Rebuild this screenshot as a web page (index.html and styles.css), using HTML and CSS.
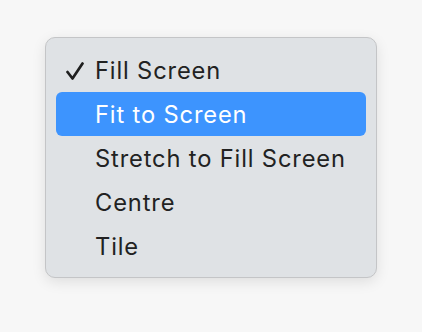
FILE: index.html
```html
<!DOCTYPE html>
<html>
<head>
<meta charset="utf-8">
<link rel="stylesheet" href="styles.css">
</head>
<body>
<div class="menu">
  <div class="item"><svg class="check" width="18" height="20" viewBox="0 0 18 20"><path d="M1.5 11 L6.5 17.5 L16.5 2.5" fill="none" stroke="#1f1f1f" stroke-width="2.7" stroke-linecap="round" stroke-linejoin="round"/></svg>Fill Screen</div>
  <div class="item active">Fit to Screen</div>
  <div class="item">Stretch to Fill Screen</div>
  <div class="item">Centre</div>
  <div class="item">Tile</div>
</div>
</body>
</html>
```
FILE: styles.css
```css
html, body {
  margin: 0;
  padding: 0;
  background: #f7f7f7;
}
body {
  width: 422px;
  height: 332px;
  padding: 37px 0 0 45px;
  box-sizing: border-box;
  font-family: Inter, "Liberation Sans", sans-serif;
}
.menu {
  width: 332px;
  height: 241px;
  box-sizing: border-box;
  background: #dfe2e5;
  border: 1px solid #c4c5c7;
  border-radius: 10px;
  padding: 10px 10px;
  box-shadow: 0 4px 14px rgba(0, 0, 0, 0.10);
}
.item {
  position: relative;
  height: 44px;
  display: flex;
  align-items: center;
  padding-left: 39px;
  border-radius: 6px;
  font-size: 23.7px;
  color: #222222;
  letter-spacing: 0.85px;
}
.item.active {
  background: #3d94fe;
  color: #ffffff;
}
.check {
  position: absolute;
  left: 10px;
  top: 13px;
}
```
